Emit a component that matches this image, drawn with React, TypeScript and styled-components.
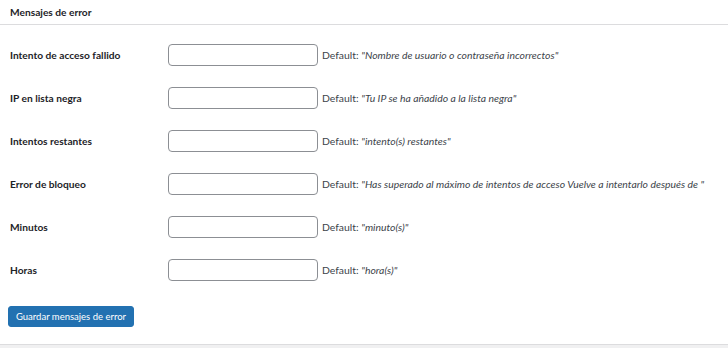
import styled, { createGlobalStyle } from 'styled-components';

const GlobalStyle = createGlobalStyle`
  html, body {
    margin: 0;
    padding: 0;
    background: #f0f0f1;
  }
  body {
    font-family: Lato, "Open Sans", sans-serif;
    color: #1d2327;
  }
`;

const fields = [
  { label: 'Intento de acceso fallido', def: 'Nombre de usuario o contraseña incorrectos' },
  { label: 'IP en lista negra', def: 'Tu IP se ha añadido a la lista negra' },
  { label: 'Intentos restantes', def: 'intento(s) restantes' },
  {
    label: 'Error de bloqueo',
    def: 'Has superado al máximo de intentos de acceso Vuelve a intentarlo después de ',
  },
  { label: 'Minutos', def: 'minuto(s)' },
  { label: 'Horas', def: 'hora(s)' },
];

export const App: React.FC = (): JSX.Element => {
  return (
    <>
      <GlobalStyle />
      <Panel>
        <PanelHeader>Mensajes de error</PanelHeader>
        <PanelBody>
          <FormTable>
            {fields.map((f) => (
              <FormRow key={f.label}>
                <Label>{f.label}</Label>
                <Field>
                  <TextInput type="text" />
                  <Hint>
                    Default: <em>"{f.def}"</em>
                  </Hint>
                </Field>
              </FormRow>
            ))}
          </FormTable>
          <SaveButton type="button">Guardar mensajes de error</SaveButton>
        </PanelBody>
      </Panel>
    </>
  );
};

const Panel = styled.div`
  background: #fff;
  border-bottom: 1px solid #dcdcde;
  width: 728px;
`;

const PanelHeader = styled.h2`
  margin: 0;
  height: 25px;
  box-sizing: border-box;
  padding: 5px 10px 0;
  font-size: 10.2px;
  font-weight: 700;
  line-height: 14px;
  border-bottom: 1px solid #dcdcde;
`;

const PanelBody = styled.div`
  padding: 8px 8px 17px;
`;

const FormTable = styled.div`
  display: flex;
  flex-direction: column;
`;

const FormRow = styled.div`
  display: grid;
  grid-template-columns: 160px 1fr;
  align-items: center;
  height: 43px;
`;

const Label = styled.div`
  padding-left: 2px;
  padding-top: 1px;
  font-size: 10.2px;
  font-weight: 700;
  color: #1d2327;
`;

const Field = styled.div`
  display: flex;
  align-items: center;
  gap: 4px;
`;

const TextInput = styled.input`
  box-sizing: border-box;
  width: 150px;
  height: 22px;
  margin: 0;
  padding: 0 6px;
  border: 1px solid #8c8f94;
  border-radius: 4px;
  background: #fff;
  font: inherit;
`;

const Hint = styled.span`
  font-size: 10.4px;
  color: #3c434a;
  white-space: nowrap;

  em {
    font-style: italic;
  }
`;

const SaveButton = styled.button`
  display: block;
  margin-top: 15px;
  height: 21px;
  width: 126px;
  padding: 0;
  border: 1px solid #2271b1;
  border-radius: 3px;
  background: #2271b1;
  color: #fff;
  font-family: Lato, "Open Sans", sans-serif;
  font-size: 9.5px;
  line-height: 19px;
  cursor: pointer;
`;

export default App;
